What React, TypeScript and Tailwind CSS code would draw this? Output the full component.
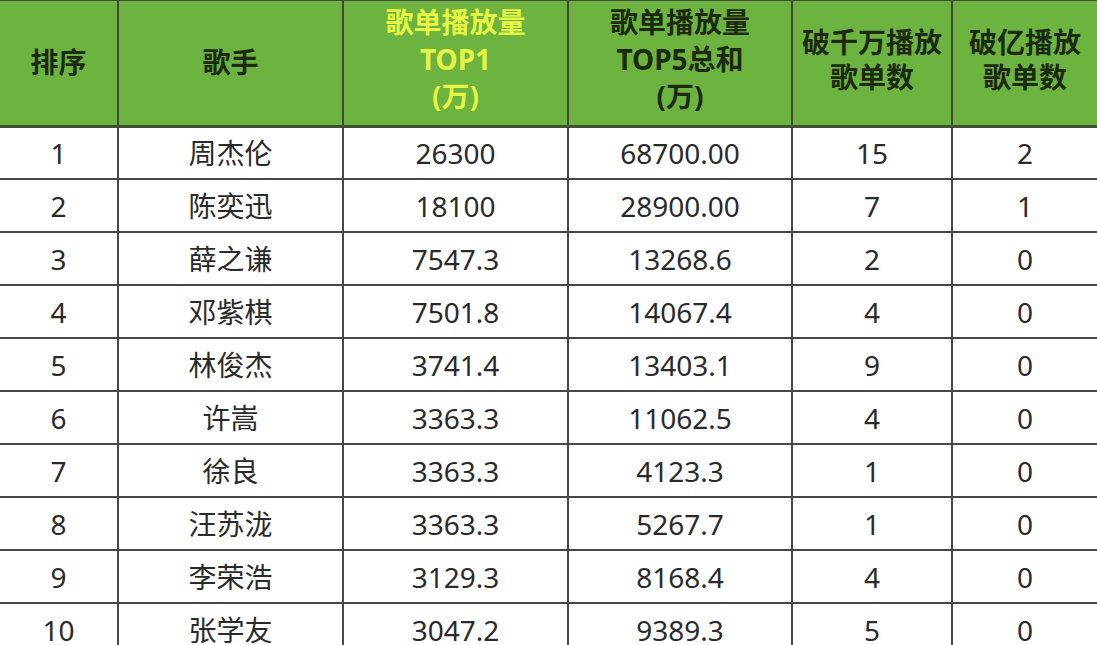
import React from "react";

const rows: [string, string, string, string, string, string][] = [
  ["1", "周杰伦", "26300", "68700.00", "15", "2"],
  ["2", "陈奕迅", "18100", "28900.00", "7", "1"],
  ["3", "薛之谦", "7547.3", "13268.6", "2", "0"],
  ["4", "邓紫棋", "7501.8", "14067.4", "4", "0"],
  ["5", "林俊杰", "3741.4", "13403.1", "9", "0"],
  ["6", "许嵩", "3363.3", "11062.5", "4", "0"],
  ["7", "徐良", "3363.3", "4123.3", "1", "0"],
  ["8", "汪苏泷", "3363.3", "5267.7", "1", "0"],
  ["9", "李荣浩", "3129.3", "8168.4", "4", "0"],
  ["10", "张学友", "3047.2", "9389.3", "5", "0"],
];

export default function App() {
  return (
    <div
      className="w-[1097px] h-[645px] overflow-hidden bg-white"
      style={{ fontFamily: '"Noto Sans", "Noto Sans CJK SC", sans-serif' }}
    >
      <table className="table-fixed border-collapse w-[1097px] -mt-[1px]">
        <colgroup>
          <col className="w-[118px]" />
          <col className="w-[225px]" />
          <col className="w-[225px]" />
          <col className="w-[224px]" />
          <col className="w-[160px]" />
          <col className="w-[145px]" />
        </colgroup>
        <thead>
          <tr className="h-[126px] bg-[#6cb33f] text-[28px] font-bold text-[#1c2a12] leading-[37px]">
            <th className="border-x-2 border-t-2 border-[#3d4a35] border-b-[3px] border-b-[#3f4f38] border-l-0 align-middle">排序</th>
            <th className="border-2 border-[#3d4a35] border-b-[3px] border-b-[#3f4f38] align-middle">歌手</th>
            <th className="border-2 border-[#3d4a35] border-b-[3px] border-b-[#3f4f38] align-middle text-[#e6f545] pb-[6px]">
              歌单播放量
              <br />
              TOP1
              <br />
              (万)
            </th>
            <th className="border-2 border-[#3d4a35] border-b-[3px] border-b-[#3f4f38] align-middle pb-[6px]">
              歌单播放量
              <br />
              TOP5总和
              <br />
              (万)
            </th>
            <th className="border-2 border-[#3d4a35] border-b-[3px] border-b-[#3f4f38] align-middle leading-[35px] pb-[6px] whitespace-nowrap">
              破千万播放
              <br />
              歌单数
            </th>
            <th className="border-2 border-[#3d4a35] border-b-[3px] border-b-[#3f4f38] border-r-0 align-middle leading-[35px] pb-[6px] whitespace-nowrap">
              破亿播放
              <br />
              歌单数
            </th>
          </tr>
        </thead>
        <tbody>
          {rows.map((r, i) => (
            <tr key={i} className="h-[53px] text-[28px] text-[#2a2a2a]">
              {r.map((c, j) => (
                <td
                  key={j}
                  className={
                    "border-2 border-[#474747] text-center align-middle p-0 leading-[36px] " +
                    (j === 0 ? "border-l-0 " : "") +
                    (j === 5 ? "border-r-0 " : "")
                  }
                >
                  {c}
                </td>
              ))}
            </tr>
          ))}
        </tbody>
      </table>
    </div>
  );
}
